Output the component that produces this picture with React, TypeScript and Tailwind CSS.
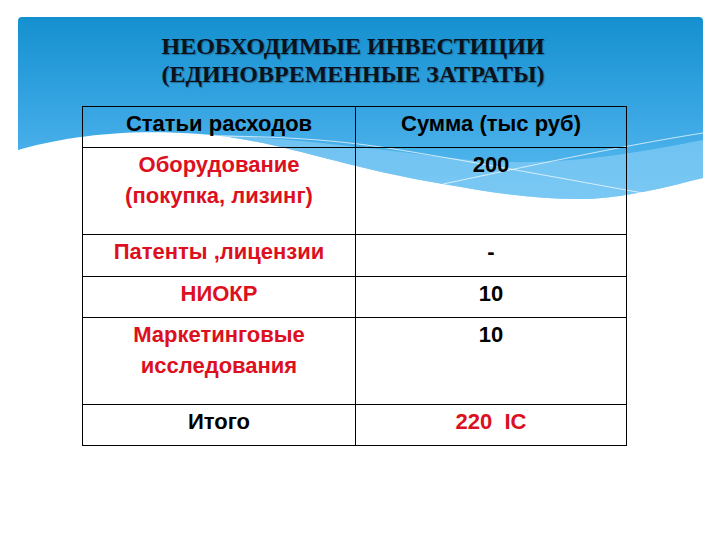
import React from "react";

const rows = [
	{ item: ["Статьи расходов"], value: "Сумма (тыс руб)", head: true, h: "h-[41px]" },
	{ item: ["Оборудование", "(покупка, лизинг)"], value: "200", h: "h-[87px]" },
	{ item: ["Патенты ,лицензии"], value: "-", h: "h-[42px]" },
	{ item: ["НИОКР"], value: "10", h: "h-[41px]" },
	{ item: ["Маркетинговые", "исследования"], value: "10", h: "h-[87px]" },
	{ item: ["Итого"], value: "220  IC", total: true, h: "h-[41px]" },
];

function HeaderWave() {
	return (
		<svg
			className="absolute inset-0"
			width="720"
			height="540"
			viewBox="0 0 720 540"
			aria-hidden="true"
		>
			<defs>
				<linearGradient id="sky" x1="0" y1="0" x2="0" y2="1">
					<stop offset="0" stopColor="#1590cf" />
					<stop offset="0.55" stopColor="#3aa7e4" />
					<stop offset="1" stopColor="#5dbcf0" />
				</linearGradient>
			</defs>
			<path
				d="M18,21 Q18,17 22,17 L699,17 Q703,17 703,21 L703,178 C670,186 630,197 590,199 C540,200 500,194 443,184 C330,165 280,140 200,134 C120,128 60,138 18,150 Z"
				fill="url(#sky)"
			/>
			<path
				d="M200,134 C300,138 380,150 470,160 C560,168 640,152 703,140 L703,178 C670,186 630,197 590,199 C540,200 500,194 443,184 C330,165 280,140 200,134 Z"
				fill="#8ed0f6"
				opacity="0.6"
			/>
			<path
				d="M205,136 C280,136 340,140 400,150 C480,163 570,180 643,193"
				fill="none"
				stroke="#ffffff"
				strokeWidth="1"
				opacity="0.7"
			/>
			<path
				d="M443,184 C520,168 620,146 703,133"
				fill="none"
				stroke="#ffffff"
				strokeWidth="1"
				opacity="0.7"
			/>
		</svg>
	);
}

export default function App() {
	return (
		<div className="relative h-[540px] w-[720px] overflow-hidden bg-white">
			<HeaderWave />
			<div className="relative flex flex-col items-center pt-[32px]">
				<h1
					className="mr-[14px] text-center font-['Liberation_Serif','Times_New_Roman',serif] text-[24px] font-bold uppercase leading-[28px] text-[#0a121e] [text-shadow:1px_1px_1px_rgba(0,0,0,0.3)]"
				>
					Необходимые инвестиции
					<br />
					(единовременные затраты)
				</h1>
				<table className="mt-[18px] ml-[-11px] w-[545px] border-collapse font-['Liberation_Sans',Arial,sans-serif] text-[22px] font-bold">
					<tbody>
						{rows.map((r) => (
							<tr className={r.h} key={r.value + r.item[0]}>
								<td
									className={`w-[273px] border-[1.5px] border-black pt-[1px] text-center align-top leading-[31px] ${r.head || r.total ? "text-black" : "text-[#dc1020]"}`}
								>
									{r.item.map((line) => (
										<div key={line}>{line}</div>
									))}
								</td>
								<td
									className={`border-[1.5px] border-black pt-[1px] text-center align-top leading-[31px] whitespace-pre ${r.total ? "text-[#dc1020]" : "text-black"}`}
								>
									{r.value}
								</td>
							</tr>
						))}
					</tbody>
				</table>
			</div>
		</div>
	);
}
